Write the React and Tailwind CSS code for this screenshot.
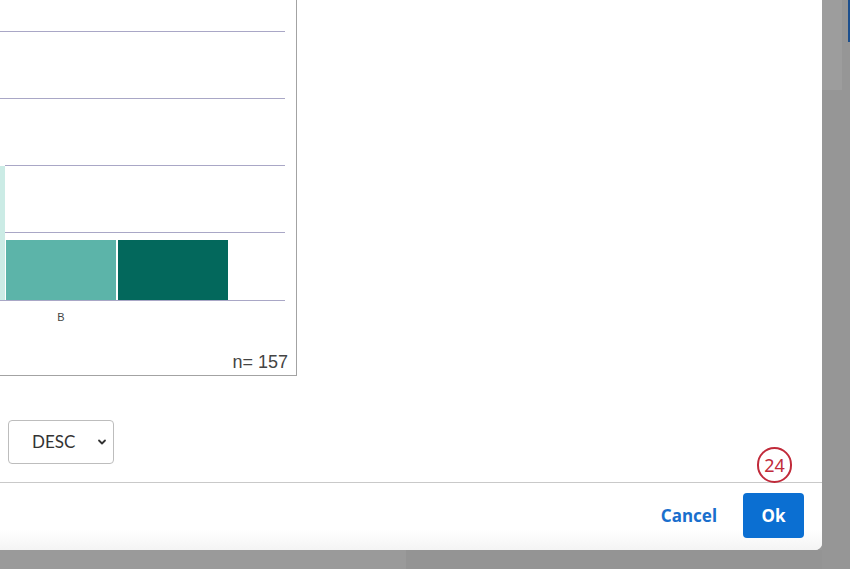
import React from "react";

function Chart() {
  const grid = "#a9a7c6";
  return (
    <svg width="297" height="376" viewBox="0 0 297 376" className="block">
      <line x1="0" y1="31.5" x2="285" y2="31.5" stroke={grid} strokeWidth="1" />
      <line x1="0" y1="98.5" x2="285" y2="98.5" stroke={grid} strokeWidth="1" />
      <line x1="5" y1="165.5" x2="285" y2="165.5" stroke={grid} strokeWidth="1" />
      <line x1="5" y1="232.5" x2="285" y2="232.5" stroke={grid} strokeWidth="1" />
      <rect x="0" y="166" width="5" height="134" fill="#cbebe5" />
      <rect x="6" y="240" width="110" height="60" fill="#5cb4a9" />
      <rect x="118" y="240" width="110" height="60" fill="#03685c" />
      <line x1="0" y1="300.5" x2="285" y2="300.5" stroke={grid} strokeWidth="1" />
      <text x="61" y="321" textAnchor="middle" fontFamily="'Liberation Sans', Arial, sans-serif" fontSize="11" fill="#444">B</text>
      <text x="288" y="368" textAnchor="end" fontFamily="'Liberation Sans', Arial, sans-serif" fontSize="18" fill="#444">n= 157</text>
    </svg>
  );
}

export default function App() {
  return (
    <div className="w-[850px] h-[569px] bg-[#999999] overflow-hidden relative flex" style={{ fontFamily: "'Noto Sans', sans-serif" }}>
      <div className="flex flex-col w-[822px]">
        <div className="w-[822px] h-[550px] bg-white rounded-br-[7px] flex flex-col relative">
          <div className="h-[482px] flex flex-col">
            <div className="w-[297px] h-[376px] border-r border-b border-[#a3a3a3] box-border">
              <Chart />
            </div>
            <div className="mt-[44px] ml-[8px] w-[106px] h-[44px] border border-[#bdbdbd] rounded-[4px] flex items-center box-border">
              <span className="ml-[23px] text-[17px] text-[#333]" style={{ fontFamily: "Lato, sans-serif" }}>DESC</span>
              <svg className="ml-auto mr-[6px]" width="10" height="8" viewBox="0 0 10 8">
                <path d="M2 2.5 L5 5.5 L8 2.5" fill="none" stroke="#333" strokeWidth="1.8" strokeLinecap="round" strokeLinejoin="round" />
              </svg>
            </div>
          </div>
          <div className="h-[1px] bg-[#c9c9c9]" />
          <div className="flex-1 flex items-center justify-end pr-[18px] pb-[2px] rounded-br-[7px] bg-gradient-to-b from-white from-70% to-[#f4f4f4]">
            <span className="text-[17px] font-bold text-[#1a6fcd] mr-[26px]">Cancel</span>
            <div className="w-[61px] h-[45px] bg-[#0b6fd2] rounded-[4px] flex items-center justify-center">
              <span className="text-[17px] font-bold text-white">Ok</span>
            </div>
          </div>
          <div className="absolute left-[757px] top-[447px] w-[35px] h-[36px] rounded-full border-2 border-[#c12a3a] bg-white flex items-center justify-center">
            <span className="text-[18px] text-[#c12a3a] leading-none">24</span>
          </div>
        </div>
        <div className="flex-1 flex">
          <div className="w-[406px] bg-[#9a9a9a]" />
          <div className="flex-1 bg-[#949494]" />
        </div>
      </div>
      <div className="flex-1 flex bg-[#969696]">
        <div className="w-[20px] h-[90px] bg-[#9d9d9d]" />
        <div className="w-[6px]" />
        <div className="w-[2px] h-[42px] bg-[#1c4f8d]" />
      </div>
    </div>
  );
}
